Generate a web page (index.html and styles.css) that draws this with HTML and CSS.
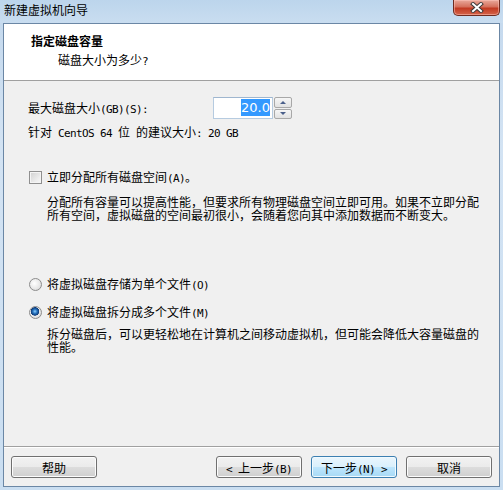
FILE: index.html
```html
<!DOCTYPE html>
<html lang="zh-CN">
<head>
    <meta charset="UTF-8">
    <title>新建虚拟机向导</title>
    <link rel="stylesheet" href="styles.css">
</head>
<body>

<div class="window">
    <div class="titlebar">
        <span class="title">新建虚拟机向导</span>
        <button class="close" type="button" aria-label="关闭">
            <svg width="16" height="11" viewBox="0 0 16 11">
                <path d="M4 2 L12 9 M12 2 L4 9" stroke="#3e3a3a" stroke-width="4" stroke-linecap="square"/>
                <path d="M4 2 L12 9 M12 2 L4 9" stroke="#ffffff" stroke-width="2" stroke-linecap="square"/>
            </svg>
        </button>
    </div>

    <div class="client">
        <div class="header">
            <div class="header-title">指定磁盘容量</div>
            <div class="header-sub">磁盘大小为多少<span class="en">?</span></div>
        </div>

        <div class="content">
            <div class="size-row">
                <label class="size-label" for="diskSize">最大磁盘大小<span class="en">(GB)(S):</span></label>
                <div class="spinner">
                    <div class="spin-input" id="diskSize"><span class="selected">20.0</span></div>
                    <div class="spin-buttons">
                        <span class="spin-btn"><i class="arrow-up"></i></span>
                        <span class="spin-btn"><i class="arrow-down"></i></span>
                    </div>
                </div>
            </div>

            <p class="hint">针对<span class="en"> CentOS 64 </span>位<span class="en"> </span>的建议大小<span class="en">: 20 GB</span></p>

            <div class="option check-row">
                <span class="checkbox"></span>
                <span>立即分配所有磁盘空间<span class="en">(A)</span>。</span>
            </div>
            <p class="desc">分配所有容量可以提高性能，但要求所有物理磁盘空间立即可用。如果不立即分配<br>所有空间，虚拟磁盘的空间最初很小，会随着您向其中添加数据而不断变大。</p>

            <div class="option radio-first">
                <span class="radio"></span>
                <span>将虚拟磁盘存储为单个文件<span class="en">(O)</span></span>
            </div>
            <div class="option radio-second">
                <span class="radio checked"></span>
                <span>将虚拟磁盘拆分成多个文件<span class="en">(M)</span></span>
            </div>
            <p class="desc desc-split">拆分磁盘后，可以更轻松地在计算机之间移动虚拟机，但可能会降低大容量磁盘的<br>性能。</p>
        </div>

        <div class="footer">
            <button class="btn" type="button">帮助</button>
            <div class="spacer"></div>
            <button class="btn" type="button"><span class="en">&lt; </span>上一步<span class="en">(B)</span></button>
            <button class="btn btn-default" type="button">下一步<span class="en">(N) &gt;</span></button>
            <button class="btn" type="button">取消</button>
        </div>
    </div>
</div>

</body>
</html>
```

FILE: styles.css
```css
* {
    margin: 0;
    padding: 0;
    box-sizing: border-box;
}

body {
    font-family: "Noto Sans CJK SC", "DejaVu Sans", sans-serif;
    font-size: 12px;
    color: #000;
    background-color: #fff;
}

/* Latin runs: half-width like the dialog font */
.en {
    font-family: "DejaVu Sans Mono", monospace;
    font-size: 11px;
    line-height: 10px;
    letter-spacing: -0.62px;
}

/* Window frame */
.window {
    width: 503px;
    height: 490px;
    display: flex;
    flex-direction: column;
    background: linear-gradient(to bottom, #c3d8ed, #d3e3f3 30%, #cadef1);
}

.titlebar {
    height: 23px;
    display: flex;
    align-items: flex-start;
    justify-content: space-between;
    padding-left: 4px;
    background: linear-gradient(to bottom, #bcd5ec, #c9ddf0);
}

.title {
    line-height: 20px;
    font-size: 12px;
}

.close {
    width: 47px;
    height: 16px;
    margin-right: 3px;
    border: 1px solid #6e2b20;
    border-top: none;
    border-radius: 0 0 5px 5px;
    background: linear-gradient(to bottom, #e9a99b, #d5705c 45%, #c23a22 55%, #d4644a);
    box-shadow: inset 0 0 0 1px rgba(255, 200, 190, 0.5);
    display: flex;
    align-items: center;
    justify-content: center;
}

/* Client area */
.client {
    flex: 1;
    margin: 0 3px 3px 3px;
    border: 1px solid #6b87a5;
    background-color: #f0f0f0;
    display: flex;
    flex-direction: column;
}

.header {
    background-color: #fff;
    border-bottom: 1px solid #a0a0a0;
    padding: 9px 0 12px 27px;
}

.header-title {
    font-weight: bold;
    line-height: 16px;
}

.header-sub {
    line-height: 16px;
    margin-top: 3px;
    padding-left: 27px;
}

.content {
    flex: 1;
    padding-left: 24px;
    padding-top: 16px;
}

.size-row {
    display: flex;
    align-items: center;
    height: 22px;
}

.size-label {
    width: 185px;
    line-height: 16px;
}

.spinner {
    display: flex;
    height: 22px;
}

.spin-input {
    width: 60px;
    height: 22px;
    background-color: #fff;
    border: 1px solid #b6cbe0;
    border-top-color: #9fb6cf;
    text-align: right;
    padding: 2px 2px 0 0;
    line-height: 16px;
    font-family: "DejaVu Sans", sans-serif;
    font-size: 13px;
}

.selected {
    background-color: #3399ff;
    color: #fff;
    padding: 1px 0;
}

.spin-buttons {
    width: 19px;
    display: flex;
    flex-direction: column;
    gap: 1px;
    padding: 0 0 0 1px;
}

.spin-btn {
    flex: 1;
    border: 1px solid #a8a8a8;
    border-radius: 2px;
    background: linear-gradient(to bottom, #f6f6f6, #e2e2e2);
    display: flex;
    align-items: center;
    justify-content: center;
}

.arrow-up {
    border-left: 3px solid transparent;
    border-right: 3px solid transparent;
    border-bottom: 3px solid #4a5f8a;
}

.arrow-down {
    border-left: 3px solid transparent;
    border-right: 3px solid transparent;
    border-top: 3px solid #4a5f8a;
}

.hint {
    line-height: 16px;
    margin-top: 5px;
}

.option {
    display: flex;
    align-items: center;
    gap: 5px;
    height: 16px;
    line-height: 16px;
    margin-left: 1px;
}

.check-row {
    margin-top: 29px;
}

.checkbox {
    width: 13px;
    height: 13px;
    border: 1px solid #8f8f8f;
    background: linear-gradient(135deg, #d0d0d0, #eeeeee 70%, #f7f7f7);
    box-shadow: inset 0 0 0 1px #f4f4f4;
}

.radio {
    width: 13px;
    height: 13px;
    border-radius: 50%;
    border: 1px solid #8c8c8c;
    background: radial-gradient(circle at 40% 40%, #ffffff, #e6e6e6 60%, #cfcfcf);
}

.radio.checked {
    background:
        radial-gradient(circle at 45% 40%, #8fd0ff 0, #2a77c2 2px, #0d3a78 4px, transparent 4.5px),
        radial-gradient(circle at 40% 40%, #ffffff, #e6e6e6 60%, #cfcfcf);
}

.desc {
    line-height: 13px;
    margin-top: 10px;
    padding-left: 19px;
    white-space: nowrap;
}

.radio-first {
    margin-top: 55px;
}

.radio-second {
    margin-top: 12px;
}

.desc-split {
    margin-top: 7px;
}

/* Bottom button bar */
.footer {
    display: flex;
    gap: 9px;
    border-top: 1px solid #a0a0a0;
    box-shadow: inset 0 1px 0 #ffffff;
    padding: 9px 7px 8px 7px;
}

.spacer {
    flex: 1;
}

.btn {
    width: 86px;
    height: 22px;
    font-family: "Noto Sans CJK SC", "DejaVu Sans", sans-serif;
    font-size: 12px;
    color: #000;
    border: 1px solid #707070;
    border-radius: 3px;
    background: linear-gradient(to bottom, #f2f2f2, #ebebeb 50%, #dddddd 50%, #cfcfcf);
    box-shadow: inset 0 0 0 1px #fcfcfc;
}

.btn-default {
    border-color: #3c7fb1;
    background: linear-gradient(to bottom, #eaf6fd, #d9f0fc 50%, #bee6fd 50%, #a7d9f5);
    box-shadow: inset 0 0 0 1px #f0faff;
}
```
